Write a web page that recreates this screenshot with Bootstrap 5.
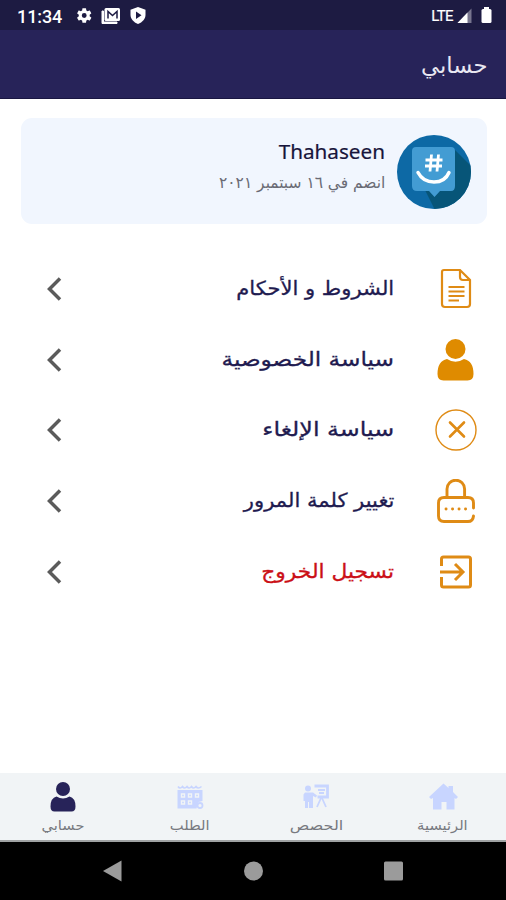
<!DOCTYPE html>
<html lang="ar" dir="rtl">
<head>
<meta charset="utf-8">
<meta name="viewport" content="width=device-width, initial-scale=1">
<title>حسابي</title>
<link href="https://cdn.jsdelivr.net/npm/bootstrap@5.3.0/dist/css/bootstrap.min.css" rel="stylesheet">
<style>
body{width:506px;height:900px;overflow:hidden;background:#fff;font-family:"DejaVu Sans",sans-serif;color:#1f1b50}
svg{display:block;flex:none}
.status{height:30px;background:#1d1b42;color:#fff;font-family:Roboto,sans-serif;padding:2px 14px 0 17px}
.clock{font-size:18px;font-weight:500;width:60px;letter-spacing:-.1px}
.lte{font-size:15px;letter-spacing:-.6px;-webkit-text-stroke:.2px}
.topbar{height:69px;background:#272359;color:#e9e8f2;padding:4px 19px 0;border-bottom:1px solid #191641}
.topbar h1{font-size:22px;font-weight:400}
.profile{height:106px;margin:19px 19px 0 21px;background:#f1f6fe;border-radius:11px;padding:1px 16px 0 0}
.uname{font-family:"Noto Sans",sans-serif;font-size:20.7px;line-height:30px;color:#17143b;-webkit-text-stroke:.2px}
.joined{font-size:16px;line-height:34px;color:#6a6b75}
.menu{padding-top:30px}
.menu-row{height:70.6px;padding:0 29px 0 46px}
.menu-icon{width:42px;margin-left:41px}
.menu-text{font-size:19.5px;line-height:30px;-webkit-text-stroke:.3px}
.logout{color:#cb1017}
.fit{display:inline-block;white-space:nowrap;transform-origin:right center}
.fit-title{transform:scaleX(1.03)}
.fit-joined{transform:scaleX(.965)}
.fit-terms{transform:scaleX(1.08)}
.fit-privacy{transform:scaleX(1.19)}
.fit-cancel{transform:scaleX(1.22)}
.fit-password{transform:scaleX(1.08)}
.fit-logout{transform:scaleX(1.115)}
.tabs{height:69px;background:#f1f4f6;border-bottom:2px solid #9fa2a3;color:#77797f;font-size:13px}
.tabs svg{margin-top:9px}
.tab-text{line-height:20px;margin-top:4px;transform:scaleX(1.13)}
.tab-wide{transform:scaleX(1.24)}
.sysnav{height:58px;background:#000}
</style>
<script src="https://cdn.jsdelivr.net/npm/bootstrap@5.3.0/dist/js/bootstrap.bundle.min.js"></script>
</head>
<body class="d-flex flex-column">
<div class="status d-flex align-items-center" dir="ltr">
  <span class="clock">11:34</span>
  <svg width="72" height="20" viewBox="0 0 72 20" fill="#fff">
    <path transform="translate(-1.9 .4) scale(.76)" d="M19.14 12.94c.04-.3.06-.61.06-.94s-.02-.64-.07-.94l2.03-1.58a.49.49 0 0 0 .12-.61l-1.92-3.32a.49.49 0 0 0-.59-.22l-2.39.96a7 7 0 0 0-1.62-.94l-.36-2.54A.48.48 0 0 0 13.920 2.400h-3.840c-.24 0-.43.17-.47.41l-.36 2.540c-.59.24-1.130.57-1.620.94l-2.390-.96a.48.48 0 0 0-.59.22L2.740 8.870a.48.48 0 0 0 .12.61l2.030 1.580a7 7 0 0 0 0 1.880l-2.030 1.580a.49.49 0 0 0-.12.610l1.920 3.320c.12.220.370.290.590.220l2.390-.960c.5.380 1.030.700 1.620.940l.360 2.540c.050.240.240.410.480.410h3.840c.240 0 .440-.170.470-.410l.360-2.540a7 7 0 0 0 1.620-.940l2.390.960c.220.080.470 0 .590-.220l1.920-3.320a.48.48 0 0 0-.12-.610zM12 15.200A3.200 3.200 0 1 1 12 8.800a3.200 3.200 0 0 1 0 6.400"/>
    <g transform="translate(7.500 0)">
    <path d="M17.500 5v12.500h15V16H19V5z" stroke="#fff"/>
    <rect x="20" y="2" width="15.500" height="13" rx="1.500"/>
    <path d="M23.500 12.500V5.500l4.500 4 4.500-4v7" fill="none" stroke="#1d1b42" stroke-width="1.500"/>
    <path d="M53.500 1l7.500 2.700v5c0 4-3 7.500-7.500 9.300C49 16.200 46 12.700 46 8.700v-5z"/>
    <path d="M51.500 5.500V13l5.500-3.700z" fill="#1d1b42"/>
    </g>
  </svg>
  <span class="lte ms-auto">LTE</span>
  <svg class="ms-1" width="35" height="20" viewBox="0 0 35 20">
    <path d="M14.500 2.500V17H.500z" fill="#77758e"/><path d="M10.500 6.500V17H.500z" fill="#fff"/>
    <rect x="24.500" y="3" width="10" height="14" rx="1.500" fill="#fff"/><rect x="27" y="1" width="5" height="3" fill="#fff"/>
  </svg>
</div>
<header class="topbar d-flex align-items-center"><h1 class="m-0"><span class="fit fit-title">حسابي</span></h1></header>
<section class="profile d-flex align-items-center">
  <svg width="74" height="74" viewBox="0 0 74 74">
    <defs><clipPath id="disc"><circle cx="37" cy="37" r="37"/></clipPath></defs>
    <g clip-path="url(#disc)"><rect width="74" height="74" fill="#0d69a5"/><path d="M56 13l25 25v45H42L28 55z" fill="#075578"/><path d="M19 12h35q4 0 4 4v35q0 5-4 5H43l-5.500 6L32 56H20q-5 0-5-5V16q0-4 4-4" fill="#439cd3"/></g>
    <path d="M34.500 19.500l-1.500 17M41.500 19.500l-1.500 17M28.500 25H45.500M28 31H45" stroke="#fff" stroke-width="2.800"/>
    <path d="M21 37.500q5 9.500 16 9.500t15-9.500" fill="none" stroke="#fff" stroke-width="3.500" stroke-linecap="round"/>
  </svg>
  <div class="me-2 pe-1 mb-2"><div class="uname d-flex"><span>Thahaseen</span></div><div class="joined"><span class="fit fit-joined">انضم في ١٦ سبتمبر ٢٠٢١</span></div></div>
</section>
<main class="menu flex-grow-1">
  <div class="menu-row d-flex align-items-center">
    <svg class="menu-icon" height="42" viewBox="0 0 42 42" fill="none" stroke="#df8b15" stroke-width="2.200"><path d="M9 2h16l10 10v24q0 3-3 3H10q-3 0-3-3V4q0-2 2-2zM25 2v7q0 3 3 3h7"/><path d="M13.500 19h16M13.500 23.500h16M13.500 28h16M13.500 32.500H24"/></svg>
    <span class="menu-text"><span class="fit fit-terms">الشروط و الأحكام</span></span>
    <svg class="me-auto" width="17" height="26" viewBox="0 0 17 26"><path d="M14 2.500L3.500 13 14 23.500" fill="none" stroke="#5b5b5b" stroke-width="3.500"/></svg>
  </div>
  <div class="menu-row d-flex align-items-center">
    <svg class="menu-icon" height="42" viewBox="0 0 42 42" fill="#df8b00"><circle cx="20.500" cy="10" r="10"/><path d="M12 20q8.500 5.500 17 0 9.500 2 9.500 15 0 6.500-6 6.500h-24q-6 0-6-6.500Q2.500 22 12 20"/></svg>
    <span class="menu-text"><span class="fit fit-privacy">سياسة الخصوصية</span></span>
    <svg class="me-auto" width="17" height="26" viewBox="0 0 17 26"><path d="M14 2.500L3.500 13 14 23.500" fill="none" stroke="#5b5b5b" stroke-width="3.500"/></svg>
  </div>
  <div class="menu-row d-flex align-items-center">
    <svg class="menu-icon" height="42" viewBox="0 0 42 42" fill="none" stroke="#df8b15"><circle cx="21" cy="21" r="20" stroke-width="1.400"/><path d="M15 13.500l14 14M29 13.500l-14 14" stroke-width="2.600" stroke-linecap="round"/></svg>
    <span class="menu-text"><span class="fit fit-cancel">سياسة الإلغاء</span></span>
    <svg class="me-auto" width="17" height="26" viewBox="0 0 17 26"><path d="M14 2.500L3.500 13 14 23.500" fill="none" stroke="#5b5b5b" stroke-width="3.500"/></svg>
  </div>
  <div class="menu-row d-flex align-items-center">
    <svg class="menu-icon" height="44" viewBox="0 0 42 44" fill="none" stroke="#df8b15" stroke-width="2.900" stroke-linecap="round"><path d="M12 18v-8a8.800 8.800 0 0 1 17.600 0v8"/><path d="M38.500 29v-5q0-5.500-5.500-5.500H9Q3.500 18.500 3.500 24v13q0 5.500 5.500 5.500h24q5 0 5.500-5.500"/><path d="M11 30h.1M17.500 30h.1M24 30h.1M30.500 30h.1"/></svg>
    <span class="menu-text"><span class="fit fit-password">تغيير كلمة المرور</span></span>
    <svg class="me-auto" width="17" height="26" viewBox="0 0 17 26"><path d="M14 2.500L3.500 13 14 23.500" fill="none" stroke="#5b5b5b" stroke-width="3.500"/></svg>
  </div>
  <div class="menu-row d-flex align-items-center">
    <svg class="menu-icon" height="42" viewBox="0 0 42 42" fill="none" stroke="#df8b15" stroke-width="3"><path d="M6.500 15V8q0-2 2-2h25q2 0 2 2v26q0 2-2 2h-25q-2 0-2-2v-8M5 21h22M20 13l8 8-8 8"/></svg>
    <span class="menu-text logout"><span class="fit fit-logout">تسجيل الخروج</span></span>
    <svg class="me-auto" width="17" height="26" viewBox="0 0 17 26"><path d="M14 2.500L3.500 13 14 23.500" fill="none" stroke="#5b5b5b" stroke-width="3.500"/></svg>
  </div>
</main>
<nav class="tabs row g-0 text-center">
  <div class="col d-flex flex-column align-items-center"><svg width="30" height="30" viewBox="0 0 30 30" fill="#c8d5ff"><path d="M15.500 1.500l5 4.500V4h4.500v6l5 5-2 2-1.500-1v11.500H18.500V20h-5v7.500H5V16l-2 1-2-2z"/></svg><span class="tab-text">الرئيسية</span></div>
  <div class="col d-flex flex-column align-items-center"><svg width="30" height="30" viewBox="0 0 30 30" fill="#c8d5ff"><circle cx="7" cy="6.500" r="3"/><path d="M4 10.500h8l4 3-1 2-3-1.500v12H8V20H7v6H4v-7H2.500v-6.500z"/><path d="M13.500 4h13v11h-10" fill="none" stroke="#c8d5ff" stroke-width="2.800"/><path d="M17 8h7M18 11h5M20 16l-4 9M21 16l4 9" stroke="#c8d5ff" stroke-width="1.800"/></svg><span class="tab-text tab-wide">الحصص</span></div>
  <div class="col d-flex flex-column align-items-center"><svg width="30" height="30" viewBox="0 0 30 30"><path d="M3 4.500q2 3 4.500 0 2 3 4.500 0 2 3 4.500 0 2 3 4.500 0 2 3 5.500 0" fill="none" stroke="#c8d5ff" stroke-width="1.600"/><path d="M2.500 8h25v11l-4 1-2 6.500h-19z" fill="#c8d5ff"/><path d="M6.500 12h3v3h-3zM13.500 12h3v3h-3zM20.500 12h3v3h-3zM6.500 19h3v3h-3zM13.500 19h3v3h-3z" fill="none" stroke="#f1f4f6" stroke-width="1.400"/><circle cx="25" cy="23.500" r="2.500" fill="none" stroke="#c8d5ff" stroke-width="1.800"/></svg><span class="tab-text">الطلب</span></div>
  <div class="col d-flex flex-column align-items-center"><svg width="30" height="30" viewBox="0 0 30 30" fill="#272359"><circle cx="15" cy="7" r="7"/><path d="M8.500 14.500q6.500 4 13 0 6 1.500 6 10 0 5-4 5h-17q-4 0-4-5 0-8.500 6-10"/></svg><span class="tab-text">حسابي</span></div>
</nav>
<div class="sysnav" dir="ltr"><svg width="506" height="58" viewBox="0 0 506 58" fill="#9b9b9b"><path d="M121.500 18.500v21L103 29z"/><circle cx="253.500" cy="29" r="9.500"/><rect x="384" y="19.500" width="19" height="19" rx="1.500"/></svg></div>
</body>
</html>
